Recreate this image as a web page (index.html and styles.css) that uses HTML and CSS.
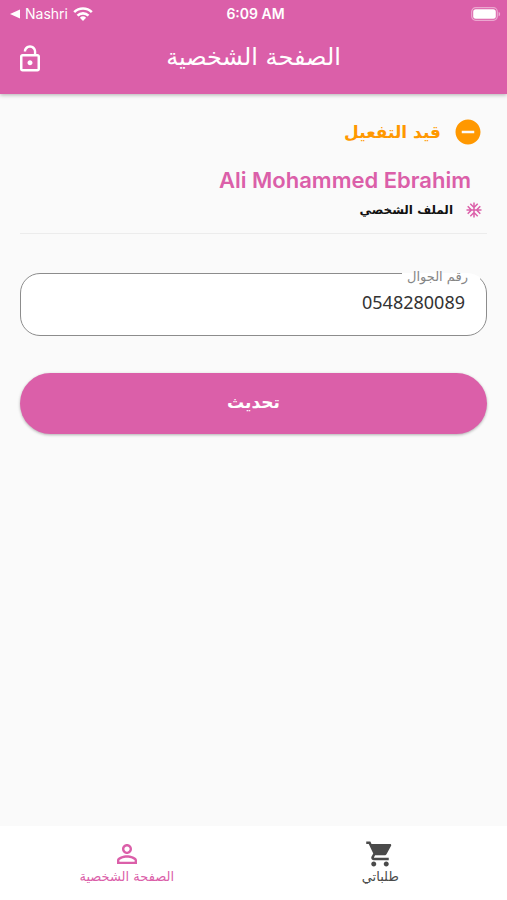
FILE: index.html
```
<!DOCTYPE html>
<html lang="ar" dir="rtl">
<head>
<meta charset="utf-8">
<meta name="viewport" content="width=device-width, initial-scale=1">
<title>الصفحة الشخصية</title>
<link rel="stylesheet" href="styles.css">
</head>
<body>
<header class="top">
  <div class="status" dir="ltr">
    <a class="back" href="#">
      <svg width="10" height="10" viewBox="0 0 10 10" aria-hidden="true"><path d="M0 5 10 .5v9z"/></svg>
      <span>Nashri</span>
      <svg width="20" height="14" viewBox="0 0 20 14" aria-hidden="true"><g fill="none" stroke="currentColor" stroke-width="2.6"><path d="M1.200 5.200a12.400 12.400 0 0 1 17.600 0"/><path d="M4.500 8.600a7.800 7.800 0 0 1 11 0"/></g><path d="M10 14 6.900 10.800a4.500 4.500 0 0 1 6.200 0z"/></svg>
    </a>
    <span class="time">6:09 AM</span>
    <svg class="battery" width="30" height="14" viewBox="0 0 30 14" aria-hidden="true"><rect x=".7" y=".7" width="25.600" height="12.600" rx="4" fill="none" stroke="#fff" stroke-opacity=".45" stroke-width="1.200"/><rect x="2.200" y="2.200" width="22.600" height="9.600" rx="2.500"/><path d="M27.600 4.700c2 .8 2 3.800 0 4.600z" opacity=".5"/></svg>
  </div>
  <div class="bar">
    <h1 class="title">الصفحة الشخصية</h1>
    <button class="lock" type="button" aria-label="قفل">
      <svg width="30" height="30" viewBox="0 0 24 24" aria-hidden="true"><path d="M12 17c1.100 0 2-.9 2-2s-.9-2-2-2-2 .9-2 2 .9 2 2 2zm6-9h-1V6c0-2.760-2.240-5-5-5S7 3.240 7 6h1.900c0-1.710 1.390-3.100 3.100-3.100 1.710 0 3.100 1.390 3.100 3.100v2H6c-1.100 0-2 .9-2 2v10c0 1.100.9 2 2 2h12c1.100 0 2-.9 2-2V10c0-1.100-.9-2-2-2zm0 12H6V10h12v10z"/></svg>
    </button>
  </div>
</header>

<main class="page">
  <section class="profile">
    <div class="state">
      <svg width="30" height="30" viewBox="0 0 24 24" aria-hidden="true"><path d="M12 2C6.480 2 2 6.480 2 12s4.480 10 10 10 10-4.480 10-10S17.520 2 12 2zm5 11H7v-2h10v2z"/></svg>
      <span>قيد التفعيل</span>
    </div>
    <h2 class="name" lang="en">Ali Mohammed Ebrahim</h2>
    <div class="section-label">
      <svg width="18" height="18" viewBox="0 0 24 24" aria-hidden="true"><path d="M22 11h-4.170l3.240-3.240-1.410-1.420L15 11h-2V9l4.660-4.660-1.420-1.410L13 6.170V2h-2v4.170L7.760 2.930 6.340 4.340 11 9v2H9L4.340 6.340 2.930 7.760 6.170 11H2v2h4.170l-3.240 3.240 1.410 1.420L9 13h2v2l-4.660 4.660 1.420 1.410L11 17.830V22h2v-4.170l3.240 3.240 1.420-1.410L13 15v-2h2l4.660 4.660 1.410-1.420L17.830 13H22z"/></svg>
      <span>الملف الشخصي</span>
    </div>
  </section>

  <form class="form">
    <fieldset class="field">
      <legend class="legend"><label for="phone">رقم الجوال</label></legend>
      <input class="input" id="phone" type="tel" dir="ltr" value="0548280089">
    </fieldset>
    <button class="submit" type="button">تحديث</button>
  </form>
</main>

<nav class="tabs">
  <a class="tab" href="#">
    <svg width="30" height="30" viewBox="0 0 24 24" aria-hidden="true"><path d="M7 18c-1.100 0-1.990.9-1.990 2S5.900 22 7 22s2-.9 2-2-.9-2-2-2zM1 2v2h2l3.600 7.590-1.350 2.450c-.16.280-.25.610-.25.960 0 1.100.9 2 2 2h12v-2H7.420c-.14 0-.25-.11-.25-.25l.03-.12.9-1.630h7.450c.75 0 1.410-.41 1.750-1.030l3.580-6.490c.08-.14.120-.31.120-.48 0-.55-.45-1-1-1H5.210l-.94-2H1zm16 16c-1.100 0-1.990.9-1.990 2s.89 2 1.990 2 2-.9 2-2-.9-2-2-2z"/></svg>
    <span>طلباتي</span>
  </a>
  <a class="tab active" href="#" aria-current="page">
    <svg width="30" height="30" viewBox="0 0 24 24" aria-hidden="true"><path d="M12 5.900c1.160 0 2.100.94 2.100 2.100s-.94 2.100-2.100 2.100S9.900 9.160 9.900 8s.94-2.100 2.100-2.100m0 9c2.970 0 6.100 1.460 6.100 2.100v1.100H5.900V17c0-.64 3.130-2.100 6.100-2.100M12 4C9.790 4 8 5.790 8 8s1.790 4 4 4 4-1.790 4-4-1.790-4-4-4zm0 9c-2.670 0-8 1.340-8 4v3h16v-3c0-2.660-5.330-4-8-4z"/></svg>
    <span>الصفحة الشخصية</span>
  </a>
</nav>
</body>
</html>
```
FILE: styles.css
```
:root {
  --pink: #db5fa9;
  --arabic: "DejaVu Sans", sans-serif;
}

* { box-sizing: border-box; }

body {
  margin: 0;
  min-height: 100vh;
  display: flex;
  flex-direction: column;
  background: #fafafa;
  color: #212121;
  font-family: var(--arabic);
}

svg { display: block; fill: currentColor; }
a { color: inherit; text-decoration: none; }
button { font-family: inherit; border: 0; cursor: pointer; }

.top {
  background: var(--pink);
  color: #fff;
  box-shadow: 0 1px 4px rgba(0, 0, 0, .3);
}

.status {
  display: grid;
  grid-template-columns: 1fr auto 1fr;
  align-items: center;
  height: 28px;
  padding: 0 6px 0 10px;
  font: 14px/20px Inter, sans-serif;
}
.back { display: flex; align-items: center; gap: 5px; }
.time { font-weight: 600; }
.battery { justify-self: end; }

.bar {
  display: grid;
  grid-template-columns: 1fr auto 1fr;
  align-items: start;
  height: 66px;
  padding: 14px 15px 0;
}
.title {
  grid-column: 2;
  margin: 0;
  font-size: 24px;
  line-height: 30px;
  font-weight: 400;
}
.lock {
  justify-self: end;
  padding: 2px 0 0;
  background: none;
  color: inherit;
}

.page { flex: 1; padding: 23px 20px; }

.profile { border-bottom: 1px solid #ececec; padding-bottom: 14px; }
.state {
  display: flex;
  align-items: center;
  gap: 12px;
  padding-right: 4px;
  color: #ff9800;
  font-size: 17px;
  line-height: 30px;
  font-weight: 700;
}
.name {
  margin: 18px 0 6px;
  padding-right: 16px;
  color: var(--pink);
  font: 600 22px/30px Inter, sans-serif;
}
.section-label {
  display: flex;
  align-items: center;
  gap: 12px;
  padding-right: 4px;
  color: #111;
  font-size: 12px;
  line-height: 18px;
  font-weight: 700;
}
.section-label svg { color: var(--pink); }

.field {
  min-width: 0;
  margin: 26px 0 37px;
  padding: 0 21px 17px;
  border: 1px solid #8c8c8c;
  border-radius: 20px;
  background: #fff;
}
.legend {
  margin-right: -15px;
  padding: 8px 12px 0 5px;
  color: #858585;
  font-size: 13px;
  line-height: 18px;
}
.input {
  display: block;
  width: 100%;
  height: 32px;
  padding: 0;
  border: 0;
  outline: 0;
  background: none;
  color: #333;
  font: 18px/24px "Noto Sans", sans-serif;
  text-align: right;
}
.submit {
  display: block;
  width: 100%;
  height: 61px;
  padding: 0 0 4px;
  border-radius: 31px;
  background: var(--pink);
  color: #fff;
  font-size: 17px;
  font-weight: 700;
  box-shadow: 0 1px 3px rgba(0, 0, 0, .3);
}

.tabs { display: flex; background: #fff; }
.tab {
  flex: 1;
  display: flex;
  flex-direction: column;
  align-items: center;
  height: 74px;
  padding-top: 13px;
  color: #4a4a4a;
  font-size: 13px;
  line-height: 16px;
}
.tab.active { color: var(--pink); }
```
